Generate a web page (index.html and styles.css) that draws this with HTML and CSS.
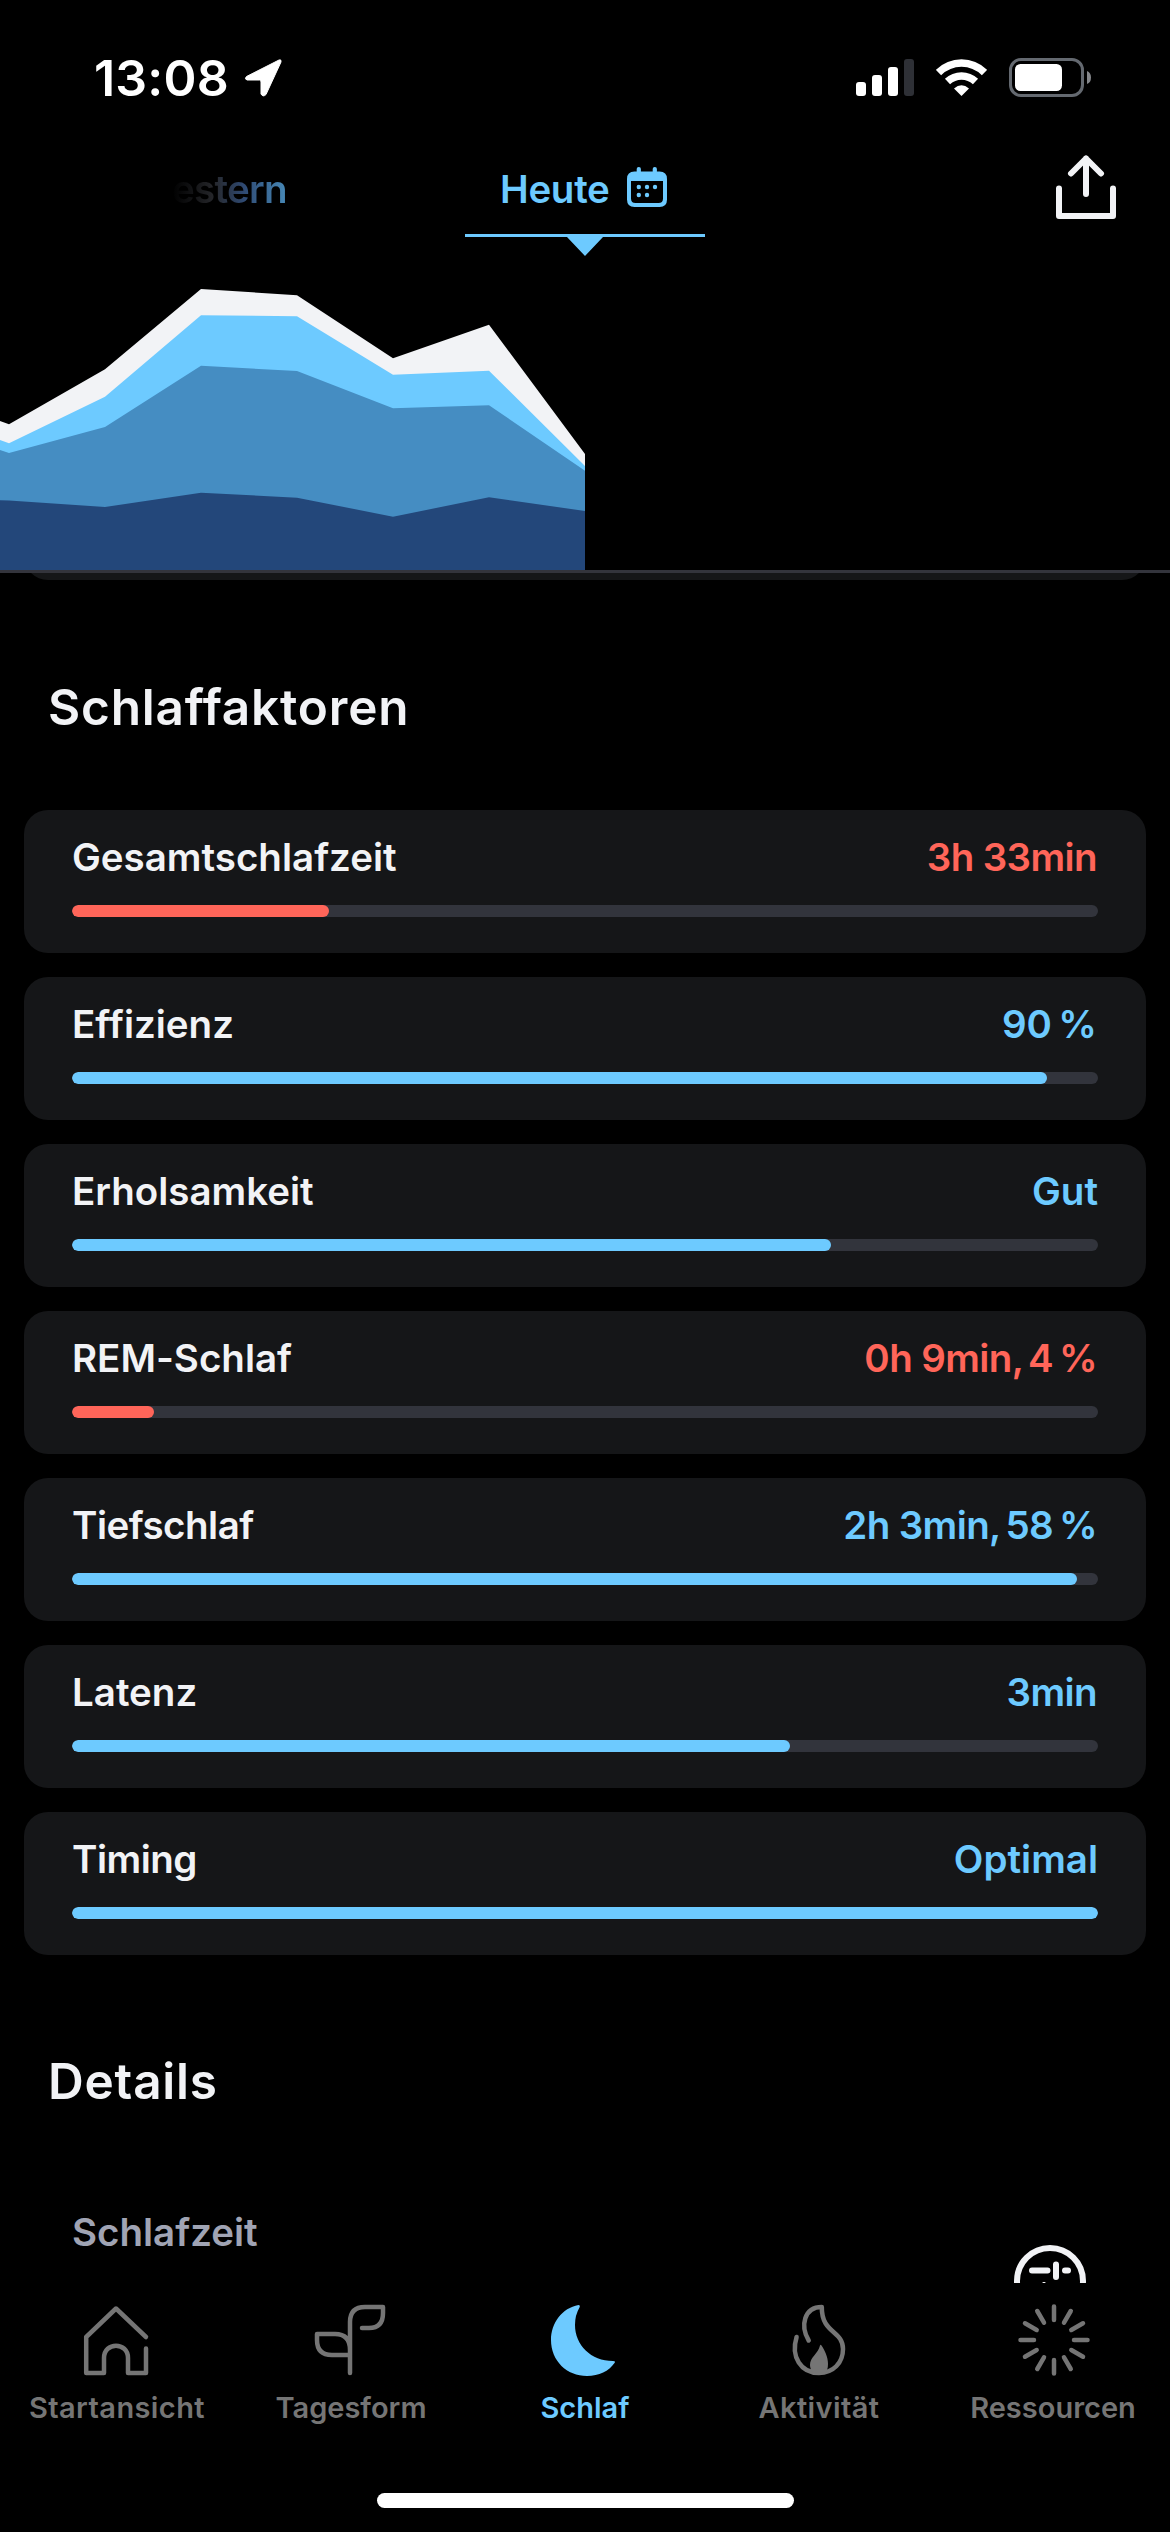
FILE: index.html
```html
<!DOCTYPE html>
<html lang="de">
<head>
<meta charset="utf-8">
<title>Schlaf</title>
<link rel="stylesheet" href="styles.css">
</head>
<body>
<header class="top">
  <div class="status">
    <div class="status-left">
      <span class="clock">13:08</span>
      <svg class="location" width="40" height="40" viewBox="0 0 40 40"><path d="M36 2 3.500 18.500Q1 21 4 22H16.500Q18 22 18 24V36Q20 39.500 23 36.500L38 4Q38.500 1 36 2Z" fill="#fff" stroke="#fff" stroke-linejoin="round"/></svg>
    </div>
    <div class="status-right">
      <svg width="58" height="38" viewBox="0 0 58 38"><g fill="#fff"><rect y="23" width="10" height="14" rx="3"/><rect x="16" y="16" width="10" height="21" rx="3"/><rect x="32" y="8" width="10" height="29" rx="3"/><rect x="48" width="10" height="37" rx="3" fill="#2e3036"/></g></svg>
      <svg class="wifi" width="51" height="38" viewBox="0 0 51 38"><g fill="none" stroke="#fff" stroke-width="7.500"><path d="M2.500 13.500C15.500 .700 35.500 .700 48.500 13.500"/><path d="M11.500 22.500C19.500 15 31.500 15 39.500 22.500"/></g><path d="M18 29.500Q25.500 23 33 29.500L25.500 37Z" fill="#fff"/></svg>
      <svg class="battery" width="83" height="40" viewBox="0 0 83 40"><rect x="1.500" y="1.500" width="72" height="36" rx="10.500" fill="none" stroke="#646970" stroke-width="3"/><rect x="6" y="6" width="47" height="27" rx="5.500" fill="#fff"/><path d="M78 13Q82 14.500 82 19.500T78 26Z" fill="#85878b"/></svg>
    </div>
  </div>
  <nav class="days">
    <span class="yesterday">estern</span>
    <div class="today">
      <span class="today-label">Heute</span>
      <svg width="40" height="40" viewBox="0 0 40 40"><g fill="#6dcaff"><path fill-rule="evenodd" d="M7.500 4.500H32.500Q40 4.500 40 12V32.500Q40 40 32.500 40H7.500Q0 40 0 32.500V12Q0 4.500 7.500 4.500ZM4 14V31.500Q4 36 8.500 36H31.500Q36 36 36 31.500V14Z"/><rect x="9.700" y="0" width="4.200" height="8" rx="2"/><rect x="25.700" y="0" width="4.200" height="8" rx="2"/><circle cx="11.800" cy="20" r="2.200"/><circle cx="20" cy="20" r="2.200"/><circle cx="28" cy="20" r="2.200"/><circle cx="11.800" cy="28" r="2.200"/><circle cx="20" cy="28" r="2.200"/></g></svg>
    </div>
    <svg class="share" width="60" height="64" viewBox="0 0 60 64" fill="none" stroke="#f2f3f6" stroke-width="6" stroke-linecap="round" stroke-linejoin="round"><path d="M3 33.500V61H57V33.500M30 3.500V39M15 18.500 30 3.500 45 18.500"/></svg>
  </nav>
  <svg class="chart" width="1170" height="336" viewBox="0 234 1170 336">
    <path d="M465 234H705V237H603L585 256 567 237H465Z" fill="#6dcaff"/>
    <path d="M0 421 9 424.300 105 369.300 201 289 297 295.300 393 358.300 489 324.700 585 454V570H0Z" fill="#f2f3f6"/>
    <path d="M0 440 9 443.300 105 396.700 201 315.300 297 316.300 393 374.700 489 370.700 585 466V570H0Z" fill="#6dcaff"/>
    <path d="M0 450 9 453 105 427 201 365.700 297 371 393 408.300 489 405.300 585 470.700V570H0Z" fill="#458dc2"/>
    <path d="M0 500.300 9 500.500 105 507 201 492.700 297 497.700 393 516.700 489 497.300 585 511V570H0Z" fill="#23477a"/>
  </svg>
</header>
<main class="content">
  <div class="card-clip"><div class="card-tail"></div></div>
  <h2 class="title">Schlaffaktoren</h2>
  <section class="factors">
    <article class="card"><div class="row"><span class="name">Gesamtschlafzeit</span><span class="value number bad">3h 33min</span></div><div class="track"><div class="fill bad-fill" style="width:25%"></div></div></article>
    <article class="card"><div class="row"><span class="name">Effizienz</span><span class="value number">90&#8239;%</span></div><div class="track"><div class="fill" style="width:95%"></div></div></article>
    <article class="card"><div class="row"><span class="name">Erholsamkeit</span><span class="value">Gut</span></div><div class="track"><div class="fill" style="width:74%"></div></div></article>
    <article class="card"><div class="row"><span class="name">REM-Schlaf</span><span class="value number bad">0h 9min<span class="comma">,</span> 4&#8239;%</span></div><div class="track"><div class="fill bad-fill" style="width:8%"></div></div></article>
    <article class="card"><div class="row"><span class="name tight">Tiefschlaf</span><span class="value number">2h 3min<span class="comma">,</span> 58&#8239;%</span></div><div class="track"><div class="fill" style="width:98%"></div></div></article>
    <article class="card"><div class="row"><span class="name">Latenz</span><span class="value number">3min</span></div><div class="track"><div class="fill" style="width:70%"></div></div></article>
    <article class="card"><div class="row"><span class="name tight">Timing</span><span class="value">Optimal</span></div><div class="track"><div class="fill" style="width:100%"></div></div></article>
  </section>
  <h2 class="title details-title">Details</h2>
  <div class="detail">
    <span class="detail-name">Schlafzeit</span>
    <svg class="face" width="72" height="38" viewBox="1014 2245 72 38" fill="none" stroke="#f2f3f6" stroke-width="6" stroke-linecap="round"><circle cx="1050" cy="2281" r="33"/><path d="M1032 2270.500H1047.500M1056 2264.500V2277M1065 2270.500H1068"/><path d="M1043 2282.500H1045" stroke-width="1"/></svg>
  </div>
</main>
<nav class="tabs">
  <a class="tab"><svg width="80" height="80" viewBox="77 2300 80 80"><path d="M146 2337 116 2308.500 86.200 2337V2373H104V2358C104 2341.500 128 2341.500 128 2358V2373H146V2348.500"/></svg><span class="wide">Startansicht</span></a>
  <a class="tab"><svg width="80" height="80" viewBox="311 2300 80 80"><path d="M350 2373V2322Q350 2307 365 2307H383V2313Q383 2328 369 2328H362M350 2355H332Q317 2355 317 2340V2334H335Q350 2334 350 2350"/></svg><span>Tagesform</span></a>
  <a class="tab active"><svg width="80" height="80" viewBox="545 2300 80 80"><path class="solid" d="M578.500 2305C562 2308 551 2323 551 2340C551 2361 567 2376 587 2376C599 2376 609 2371 614.500 2363Q616 2361 613 2361C591 2361 575 2345 575 2325Q575 2315 579.500 2307.500Q580.500 2305 578.500 2305Z"/></svg><span>Schlaf</span></a>
  <a class="tab"><svg width="80" height="80" viewBox="779 2300 80 80"><path d="M808.700 2340.500C800 2326 804 2307 821.800 2307C821.500 2334 843 2330 843 2349C843 2363 833 2373 819 2373C801 2373 790.500 2357 796.600 2337"/><path class="solid" d="M820 2345.500C818 2354 810 2357 810 2365Q810 2370 814 2374H825Q828 2370 828 2364C828 2357 824.500 2350 821.500 2345.500Q820.500 2344 820 2345.500Z"/></svg><span class="wide">Aktivität</span></a>
  <a class="tab"><svg width="80" height="80" viewBox="-41 -40 80 80"><path d="M0-33.500V-20M0 33.500V20M-33.500 0H-20M33.500 0H20M16.750-29 10-17.320M-16.750-29-10-17.320M16.750 29 10 17.320M-16.750 29-10 17.320M29-16.750 17.320-10M29 16.750 17.320 10M-29-16.750-17.320-10M-29 16.750-17.320 10"/></svg><span>Ressourcen</span></a>
</nav>
<footer class="home"><div class="home-bar"></div></footer>
</body>
</html>
```
FILE: styles.css
```css
* { box-sizing: border-box; }
body { margin: 0; width: 1170px; height: 2532px; overflow: hidden; display: flex; flex-direction: column; background: #000; color: #f2f3f6; font-family: Inter, "Liberation Sans", sans-serif; font-weight: 600; font-variant-ligatures: none; }
svg { display: block; flex: none; }
.top { height: 573px; border-bottom: 3px solid #33343c; display: flex; flex-direction: column; flex: none; }
.status { height: 154px; padding: 58px 78px 0 94px; display: flex; justify-content: space-between; }
.status-left, .status-right { display: flex; align-items: flex-start; }
.clock { width: 149px; font-size: 50px; line-height: 40px; letter-spacing: 0.2px; color: #fff; white-space: nowrap; }
.status-right svg { margin-top: 1px; }
.status-right .wifi { margin-left: 22px; }
.status-right .battery { margin: 0 0 0 22px; }
.days { height: 80px; padding: 0 54px 0 172px; display: flex; }
.yesterday { width: 328px; padding-top: 12px; font-size: 38.500px; line-height: 46px; letter-spacing: -0.7px; background: linear-gradient(90deg, #000 0, #26272b 42px, #2f4a73 72px, #4686b4 113px); -webkit-background-clip: text; background-clip: text; color: transparent; }
.today { width: 556px; display: flex; color: #6dcaff; }
.today-label { width: 127px; padding-top: 12px; font-size: 38.500px; line-height: 46px; letter-spacing: -0.3px; }
.today svg { margin-top: 13px; }
.share { margin-top: 1px; }
.content { height: 1710px; flex: none; overflow: hidden; display: flex; flex-direction: column; }
.card-clip { height: 7px; margin: 0 24px 97px; overflow: hidden; display: flex; align-items: flex-end; flex: none; }
.card-tail { width: 100%; height: 60px; border-radius: 24px; background: #151618; flex: none; }
.title { margin: 0 48px; font-size: 49.500px; line-height: 60px; font-weight: 600; letter-spacing: 0.8px; white-space: nowrap; }
.factors { padding: 73px 24px 96px; display: flex; flex-direction: column; gap: 24px; }
.card { height: 143px; padding: 24px 48px 36px; border-radius: 24px; background: #151618; }
.row { display: flex; justify-content: space-between; font-size: 38.500px; line-height: 46px; white-space: nowrap; }
.tight { letter-spacing: -0.5px; }
.value { color: #6dcaff; }
.number { padding-right: 1px; letter-spacing: -0.6px; }
.comma { letter-spacing: -5px; }
.bad { color: #ff6559; }
.track { height: 12px; margin-top: 25px; border-radius: 6px; background: #32343c; overflow: hidden; }
.fill { height: 12px; border-radius: 6px; background: #6dcaff; }
.bad-fill { background: #ff6559; }
.detail { padding: 98px 84px 0 72px; display: flex; justify-content: space-between; font-size: 38.500px; line-height: 46px; color: #a0a4b4; }
.face { margin-top: 36px; }
.tabs { height: 180px; padding-top: 17px; display: grid; grid-template-columns: repeat(5, 1fr); flex: none; font-size: 29px; line-height: 36px; color: #757575; }
.tab { display: flex; flex-direction: column; align-items: center; gap: 10px; }
.tab path { fill: none; stroke: currentColor; stroke-width: 4.500px; stroke-linecap: round; stroke-linejoin: round; }
.tab .solid { fill: currentColor; stroke: none; }
.wide { letter-spacing: 0.4px; }
.active { color: #6dcaff; }
.home { padding-top: 30px; display: flex; justify-content: center; }
.home-bar { width: 417px; height: 15px; border-radius: 8px; background: #fff; }
```
